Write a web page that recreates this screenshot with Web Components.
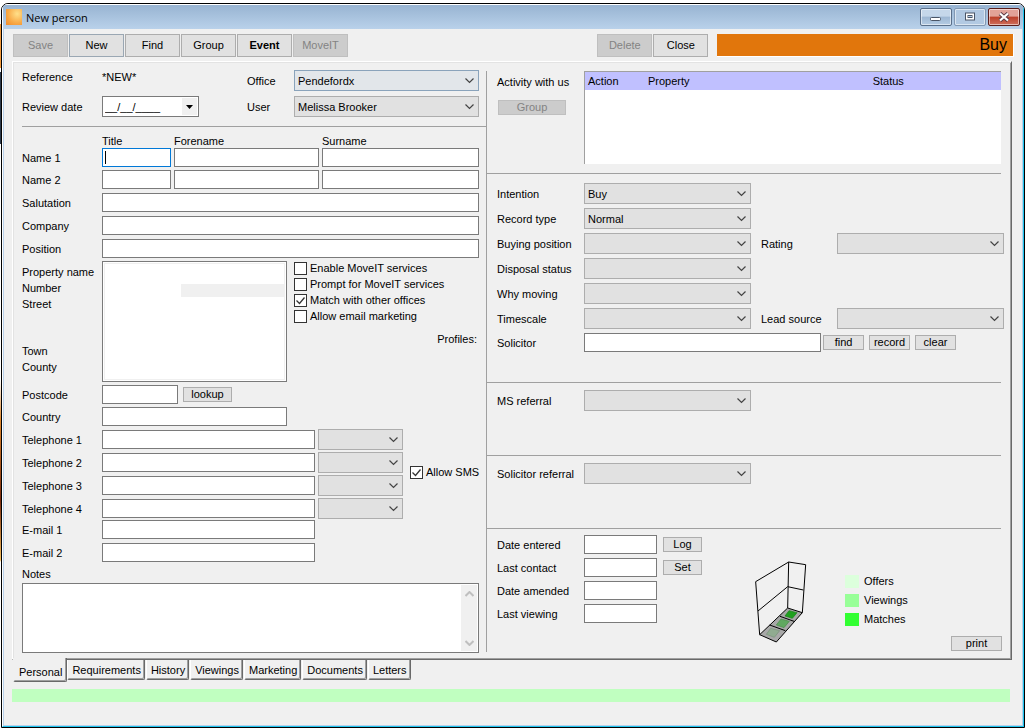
<!DOCTYPE html>
<html lang="en">
<head>
<meta charset="utf-8">
<title>New person</title>
<style>
  html, body { margin: 0; }
  body {
    font: 11px/14px "Liberation Sans", Arial, sans-serif;
    color: #000;
    background: linear-gradient(#fff 0 24px, #f29a3c 24px 68px, #fff 68px 72px, #2b3a4c 72px 144px, #fff 144px 380px, #e08a30 420px, #7a2c10 500px, #f6c060 560px, #fff 562px) 0 0 / 1px 100% no-repeat #fff;
  }
</style>
</head>
<body>
<app-window caption="New person">
  <tool-bar></tool-bar>
  <tab-panel>
    <person-form></person-form>
    <activity-form></activity-form>
  </tab-panel>
</app-window>

<script>
const chevron = `url("data:image/svg+xml,%3Csvg xmlns='http://www.w3.org/2000/svg' width='9' height='6'%3E%3Cpath d='M.5 .5l4 4 4-4' fill='none' stroke='%23444' stroke-width='1.2'/%3E%3C/svg%3E")`;

const base = `
  *, *::before, *::after { box-sizing: border-box; }
  input, select, textarea, button { font: inherit; color: inherit; margin: 0; border-radius: 0; min-width: 0; }
  input[type=text], textarea { display: block; width: 100%; height: 19px; padding: 0 2px; border: 1px solid #7a7a7a; background: #fff; outline: 0; }
  select { display: block; appearance: none; width: 100%; height: 21px; padding: 0 20px 0 3px; border: 1px solid #adadad;
    background: ${chevron} right 4px center no-repeat #e1e1e1; outline: 0; }
  button { display: block; height: 15px; padding: 0; border: 1px solid #adadad; background: #e1e1e1; line-height: 13px; text-align: center; white-space: nowrap; }
  button:disabled { background: #ccc; border-color: #bfbfbf; color: #838383; }
  input[type=checkbox] { appearance: none; width: 13px; height: 13px; border: 1px solid #333; background: #fff; flex: none; }
  input[type=checkbox]:checked { background: url("data:image/svg+xml,%3Csvg xmlns='http://www.w3.org/2000/svg' width='11' height='11'%3E%3Cpath d='M1.5 5.5l3 3 5-6' fill='none' stroke='%23333' stroke-width='1.3'/%3E%3C/svg%3E") #fff; }
  label { white-space: nowrap; }
  hr { border: 0; height: 1px; margin: 0; background: #a0a0a0; }
`;

function define(name, html) {
  const template = document.createElement('template');
  template.innerHTML = html.replace('<style>', '<style>' + base);
  customElements.define(name, class extends HTMLElement {
    constructor() {
      super();
      this.attachShadow({ mode: 'open' }).append(template.content.cloneNode(true));
    }
    connectedCallback() {
      const caption = this.shadowRoot.querySelector('[data-caption]');
      if (caption) caption.textContent = this.getAttribute('caption');
    }
  });
}

define('app-window', `
<style>
  :host { display: flex; flex-direction: column; min-height: calc(100vh - 3px); margin: 3px 0 0 1px; border: 1px solid #000; border-radius: 7px 7px 0 0; box-sizing: border-box; overflow: hidden; }
  .rim { flex: 1; display: flex; flex-direction: column; border: 1px solid #fff; border-right-color: #1cc4ee; border-bottom-color: #1cc4ee; }
  header { display: flex; align-items: center; gap: 4px; height: 24px; padding: 0 3px; background: linear-gradient(#98b4d2, #b9d1ea); font: 11px/16px "Open Sans", "Noto Sans", sans-serif; }
  .logo { width: 16px; height: 16px; background: radial-gradient(circle at 70% 30%, #ffe08a, #f8a845 60%, #f08a2c); }
  h1 { flex: 1; margin: 0; padding-top: 1px; font: inherit; }
  .controls { display: flex; gap: 2px; padding-bottom: 1px; }
  .controls button { display: grid; place-items: center; width: 32px; height: 18px; border: 1px solid #5a6f8a; border-radius: 2px; background: linear-gradient(#c5d7ea 45%, #9db7d3 50%, #b5cce4); box-shadow: inset 0 0 0 1px #ffffff88; }
  .controls .max { border-color: #8298b3; background: #b2c9e2; }
  .controls .close { border-color: #5b1f1c; background: linear-gradient(#e2a298 45%, #bb3f2a 50%, #cf6f5c); }
  main { flex: 1; padding: 5px 10px 16px 8px; background: #f0f0f0; border: 1px solid #b9d1ea; border-top: 0; }
</style>
<div class="rim">
  <header>
    <span class="logo"></span>
    <h1 data-caption></h1>
    <div class="controls">
      <button aria-label="Minimize"><svg width="12" height="10"><rect x=".5" y="5.5" width="10" height="3" rx="1" fill="#fff" stroke="#4a5566"/></svg></button>
      <button class="max" aria-label="Maximize"><svg width="12" height="10"><rect x="1.500" y="1" width="9" height="7" fill="#fff" stroke="#4a5566"/><rect x="4" y="3.500" width="4" height="2" fill="#b2c9e2" stroke="#4a5566"/></svg></button>
      <button class="close" aria-label="Close window"><svg width="12" height="10"><path d="M2 1.500l8 7M10 1.500l-8 7" stroke="#5b3a44" stroke-width="4"/><path d="M2 1.500l8 7M10 1.500l-8 7" stroke="#fff" stroke-width="2.200"/></svg></button>
    </div>
  </header>
  <main><slot></slot></main>
</div>`);

define('tool-bar', `
<style>
  :host { display: flex; gap: 1px; margin: 0 -2px 4px 1px; }
  button { width: 55px; height: 23px; line-height: 21px; }
  .first { border-color: #9aa7b3; }
  .bold { font-weight: bold; }
  .gap { flex: 251 1 0; }
  .mode { flex: 294 1 0; margin-left: 8px; padding-right: 6px; border: solid #fff; border-width: 0 1px 1px 0; background: #e1760c; font: 16px/22px "Liberation Sans", Arial, sans-serif; text-align: right; }
</style>
<button disabled>Save</button>
<button class="first">New</button>
<button>Find</button>
<button>Group</button>
<button class="bold">Event</button>
<button disabled>MoveIT</button>
<span class="gap"></span>
<button disabled>Delete</button>
<button>Close</button>
<div class="mode">Buy</div>`);

define('tab-panel', `
<style>
  :host { display: block; }
  .page { display: grid; grid-template-columns: minmax(0, 464fr) minmax(0, 518fr); padding: 8px 7px 6px 9px;
    border: 1px solid; border-color: #fff #696969 #696969 #fff; box-shadow: inset 1px 1px #e3e3e3, inset -1px -1px #a0a0a0; }
  nav { display: flex; align-items: flex-start; padding-left: 1px; }
  nav button { height: 20px; margin-right: 1px; padding: 1px 3px 0 4px; border: solid; border-width: 0 1px 1px; border-color: #fff #696969 #696969 #fff; border-radius: 0 0 2px 2px; background: none; box-shadow: inset -1px -1px #a0a0a0; line-height: 18px; }
  nav .on { position: relative; height: 24px; margin: -2px 0 0; padding: 4px 4px 0 5px; background: #f0f0f0; line-height: 20px; border-left-color: #f0f0f0; }
  .status { height: 13px; margin: 7px 2px 0 0; background: #c0ffc0; }
</style>
<div class="page"><slot></slot></div>
<nav role="tablist">
  <button class="on" role="tab" aria-selected="true">Personal</button>
  <button role="tab">Requirements</button>
  <button role="tab">History</button>
  <button role="tab">Viewings</button>
  <button role="tab">Marketing</button>
  <button role="tab">Documents</button>
  <button role="tab">Letters</button>
</nav>
<div class="status"></div>`);

define('person-form', `
<style>
  :host { display: flex; flex-direction: column; }
  .block { margin-right: 7px; display: grid; align-items: center; }
  .head { grid-template-columns: 80px minmax(97px, 145fr) 47px minmax(0, 185fr); grid-auto-rows: 21px; row-gap: 5px; margin-bottom: 9px; }
  .head .top { align-self: start; }
  .combo { display: flex; width: 97px; height: 21px; padding: 1px; border: 1px solid #7a7a7a; background: #fff; }
  .combo input[type=text] { flex: 1; height: 17px; padding: 0 1px; border: 0; }
  .combo button { width: 15px; height: 17px; border: 0; background: #f0f0f0; display: grid; place-items: center; }
  .names { grid-template-columns: 77px 69px minmax(0, 145fr) minmax(0, 157fr); gap: 3px; margin-top: 7px; }
  .names .cap { margin-bottom: -3px; }
  .names input.active { border-color: #0078d7; background: linear-gradient(#000, #000) 2px center / 1px 13px no-repeat #fff; caret-color: transparent; }
  .plain { grid-template-columns: 80px minmax(0, 1fr); row-gap: 4px; margin-top: 4px; }
  .address { grid-template-columns: 80px 185fr 192fr; align-items: stretch; margin-top: 3px; }
  .lines { display: flex; flex-direction: column; justify-content: space-between; padding: 3px 0 7px; }
  .lines div, .ticks { display: grid; grid-auto-rows: 16px; line-height: 16px; }
  .address textarea { height: 121px; resize: none; padding: 3px; background: linear-gradient(#f0f0f0, #f0f0f0) right 1px top 22px / 104px 13px no-repeat #fff; box-shadow: inset 0 0 0 1px #fff, inset 0 0 0 2px #f0f0f0; }
  .ticks { margin-left: 7px; align-content: start; }
  .tick { display: flex; gap: 3px; align-items: center; height: 14px; line-height: 14px; }
  .profiles { margin: 6px 2px 0 0; text-align: right; }
  .place { grid-template-columns: 80px minmax(0, 185fr) 192fr; row-gap: 3px; margin-top: 3px; }
  .post { display: grid; grid-template-columns: 76px 49px; gap: 5px; align-items: center; }
  .phones { grid-template-columns: 80px minmax(0, 213fr) 3px minmax(0, 85fr) 76px; grid-auto-rows: 21px; row-gap: 2px; margin-top: 3px; }
  .phones select { grid-column: 4; }
  .sms { grid-area: 1 / 5 / 5 / 6; margin-left: 7px; padding-bottom: 4px; }
  .mails { grid-template-columns: 80px minmax(0, 213fr) 164fr; row-gap: 4px; margin-top: 1px; }
  .notes { margin: 5px 7px 0 0; display: grid; gap: 2px; flex: 1; grid-template-rows: 14px 1fr; }
  .scroll { display: flex; min-height: 70px; padding: 1px; border: 1px solid #7a7a7a; background: #fff; }
  .scroll textarea { flex: 1; height: auto; border: 0; resize: none; overflow: hidden; }
  .bar { width: 16px; display: flex; flex-direction: column; justify-content: space-between; align-items: center; padding: 6px 0 5px; background: #f0f0f0; }
  #office { border-color: #8aa3bb; background-color: #e2e6ea; }
</style>
<section class="block head">
  <span class="top">Reference</span><span class="top">*NEW*</span>
  <label for="office">Office</label><select id="office"><option>Pendefordx</option></select>
  <label for="review">Review date</label>
  <div class="combo"><input type="text" id="review" value="__/__/____"><button aria-label="Pick date"><svg width="7" height="4"><path d="M0 0h7L3.500 4z"/></svg></button></div>
  <label for="user">User</label><select id="user"><option>Melissa Brooker</option></select>
</section>
<hr>
<section class="block names">
  <span></span><label class="cap" for="t1">Title</label><label class="cap" for="f1">Forename</label><label class="cap" for="s1">Surname</label>
  <label for="t1">Name 1</label><input type="text" id="t1" class="active"><input type="text" id="f1"><input type="text" id="s1">
  <label for="t2">Name 2</label><input type="text" id="t2"><input type="text" id="f2" aria-label="Forename 2"><input type="text" id="s2" aria-label="Surname 2">
</section>
<section class="block plain">
  <label for="sal">Salutation</label><input type="text" id="sal">
  <label for="com">Company</label><input type="text" id="com">
  <label for="pos">Position</label><input type="text" id="pos">
</section>
<section class="block address">
  <div class="lines">
    <div><label for="addr">Property name</label><label for="addr">Number</label><label for="addr">Street</label></div>
    <div><label for="addr">Town</label><label for="addr">County</label></div>
  </div>
  <textarea id="addr"></textarea>
  <div class="ticks">
    <label class="tick"><input type="checkbox">Enable MoveIT services</label>
    <label class="tick"><input type="checkbox">Prompt for MoveIT services</label>
    <label class="tick"><input type="checkbox" checked>Match with other offices</label>
    <label class="tick"><input type="checkbox">Allow email marketing</label>
    <div class="profiles">Profiles:</div>
  </div>
</section>
<section class="block place">
  <label for="pc">Postcode</label><div class="post"><input type="text" id="pc"><button>lookup</button></div><span></span>
  <label for="cy">Country</label><input type="text" id="cy"><span></span>
</section>
<section class="block phones">
  <label for="p1">Telephone 1</label><input type="text" id="p1"><select aria-label="Telephone 1 type"></select>
  <label for="p2">Telephone 2</label><input type="text" id="p2"><select aria-label="Telephone 2 type"></select>
  <label for="p3">Telephone 3</label><input type="text" id="p3"><select aria-label="Telephone 3 type"></select>
  <label for="p4">Telephone 4</label><input type="text" id="p4"><select aria-label="Telephone 4 type"></select>
  <div class="sms"><label class="tick"><input type="checkbox" checked>Allow SMS</label></div>
</section>
<section class="block mails">
  <label for="e1">E-mail 1</label><input type="text" id="e1"><span></span>
  <label for="e2">E-mail 2</label><input type="text" id="e2"><span></span>
</section>
<section class="notes">
  <label for="notes">Notes</label>
  <div class="scroll"><textarea id="notes"></textarea>
    <span class="bar">
      <svg width="9" height="6"><path d="M.5 5l4-4 4 4" fill="none" stroke="#bfbfbf" stroke-width="2"/></svg>
      <svg width="9" height="6"><path d="M.5 1l4 4 4-4" fill="none" stroke="#bfbfbf" stroke-width="2"/></svg>
    </span>
  </div>
</section>`);

define('activity-form', `
<style>
  :host { display: block; margin: 1px 0; border-left: 1px solid #a0a0a0; padding-left: 10px; }
  hr { margin: 0 3px 0 -10px; }
  .activity { display: grid; grid-template-columns: 87px minmax(0, 1fr); align-items: start; min-height: 102px; margin-right: 3px; }
  .side { display: grid; gap: 11px; padding-top: 4px; }
  .side button { width: 68px; margin-left: 1px; }
  .list { min-height: 93px; border: 1px solid #a0a0a0; border-width: 1px 0 0 1px; background: #fff; }
  table { width: 100%; border-collapse: collapse; table-layout: fixed; }
  th { height: 18px; padding: 0 0 0 3px; background: #c0c0ff; font-weight: normal; text-align: left; }
  .c-action { width: 60px; }
  .c-property { width: 54%; }
  .grid { display: grid; grid-template-columns: 87px minmax(0, 1fr) 86px minmax(0, 1fr); grid-auto-rows: 21px; row-gap: 4px; align-items: center; }
  .grid .l { grid-column: 1; }
  .grid .m { padding-left: 10px; }
  .needs { min-height: 208px; padding-top: 9px; }
  .referral { min-height: 72px; padding-top: 7px; }
  .solicitor { display: flex; align-items: center; gap: 5px; padding-right: 48px; margin-top: 4px; }
  .solicitor label { width: 82px; flex: none; }
  .solicitor input { flex: 1; margin-right: -3px; }
  .solicitor button { width: 41px; flex: none; }
  .foot { display: flex; padding-top: 6px; min-height: 122px; }
  .dates { display: grid; grid-template-columns: 87px 73px 45px; row-gap: 4px; align-items: center; align-content: start; }
  .dates .l { grid-column: 1; }
  .dates button { margin-left: 6px; }
  .chart { flex: none; margin: 26px 0 0 53px; }
  .legend { list-style: none; margin: 40px 0 0 38px; padding: 0; display: grid; gap: 6px; align-content: start; line-height: 13px; }
  .legend li { display: flex; gap: 5px; }
  .legend i { width: 14px; height: 13px; }
  .offers { background: #dcffdc; }
  .viewings { background: #98ff98; }
  .matches { background: #32ff32; }
  .print { width: 51px; margin: auto 2px 0 auto; }
</style>
<section class="activity">
  <div class="side"><span>Activity with us</span><button disabled>Group</button></div>
  <div class="list"><table><colgroup><col class="c-action"><col class="c-property"><col></colgroup><thead><tr><th>Action</th><th>Property</th><th>Status</th></tr></thead></table></div>
</section>
<hr>
<section class="needs">
  <div class="grid">
    <label class="l" for="int">Intention</label><select id="int"><option>Buy</option></select>
    <label class="l" for="rec">Record type</label><select id="rec"><option>Normal</option></select>
    <label class="l" for="buy">Buying position</label><select id="buy"></select><label class="m" for="rat">Rating</label><select id="rat"></select>
    <label class="l" for="dis">Disposal status</label><select id="dis"></select>
    <label class="l" for="why">Why moving</label><select id="why"></select>
    <label class="l" for="tim">Timescale</label><select id="tim"></select><label class="m" for="led">Lead source</label><select id="led"></select>
  </div>
  <div class="solicitor"><label for="sol">Solicitor</label><input type="text" id="sol"><button>find</button><button>record</button><button>clear</button></div>
</section>
<hr>
<section class="referral grid"><label for="ms">MS referral</label><select id="ms"></select></section>
<hr>
<section class="referral grid"><label for="sr">Solicitor referral</label><select id="sr"></select></section>
<hr>
<section class="foot">
  <div class="dates">
    <label class="l" for="de">Date entered</label><input type="text" id="de"><button>Log</button>
    <label class="l" for="lc">Last contact</label><input type="text" id="lc"><button>Set</button>
    <label class="l" for="da">Date amended</label><input type="text" id="da">
    <label class="l" for="lv">Last viewing</label><input type="text" id="lv">
  </div>
  <svg class="chart" width="52" height="82" viewBox="75 62 156 246" role="img" aria-label="Activity chart">
    <path d="M173 203L217 217 139 305 89 283z" fill="#a8a8a8"/>
    <path d="M177 211l24 6-14 17-22-7z" fill="#1fa01f" stroke="#158015" stroke-width="2"/>
    <path d="M153 236l25 7-16 19-23-8z" fill="#60a860" stroke="#4a8a4a" stroke-width="2"/>
    <path d="M122 264l27 7-16 20-24-9z" fill="#90ab90" stroke="#789078" stroke-width="2"/>
    <path d="M77 124L176 65 173 203 89 283zM84 212l89-73 47 10M176 65l51 8-10 144-44-14M217 217L139 305 89 283M150 228l42 15M119 254l47 17" fill="none" stroke="#000" stroke-width="3"/>
  </svg>
  <ul class="legend">
    <li><i class="offers"></i>Offers</li>
    <li><i class="viewings"></i>Viewings</li>
    <li><i class="matches"></i>Matches</li>
  </ul>
  <button class="print">print</button>
</section>`);
</script>
</body>
</html>
